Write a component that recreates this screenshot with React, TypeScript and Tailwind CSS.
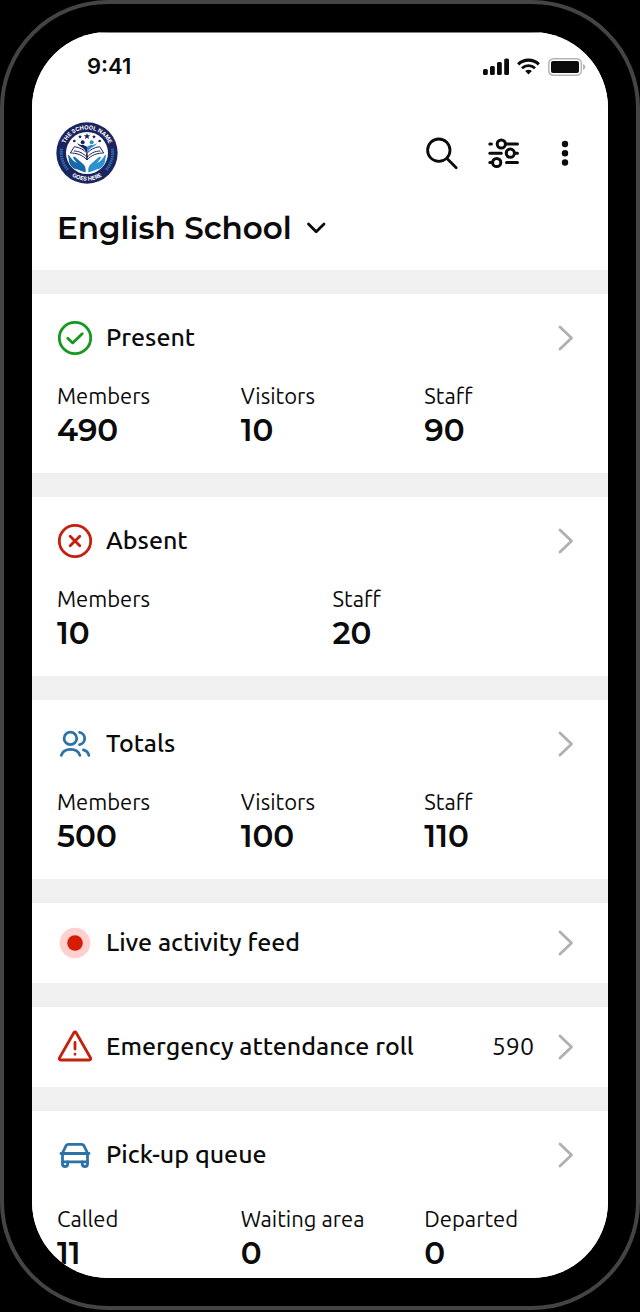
import type { ReactNode } from 'react';

interface Stat {
  label: string;
  value: number;
}

interface CardProps {
  icon: ReactNode;
  title: string;
  stats?: Stat[];
  count?: number;
  roomy?: boolean;
}

const SchoolLogo = () => (
  <svg viewBox="0 0 186 186" className="size-[62px]" role="img" aria-label="The School Name Goes Here">
    <defs>
      <path id="logo-top" d="M 22 93 A 71 71 0 0 1 164 93" />
      <path id="logo-bottom" d="M 10 93 A 83 83 0 0 0 176 93" />
    </defs>
    <circle cx="93" cy="93" r="92" fill="#1c2460" />
    <circle cx="93" cy="93" r="63" fill="#fff" />
    <g fill="#fff" fontFamily="Inter, sans-serif" fontWeight="700" fontSize="17" textAnchor="middle">
      <text>
        <textPath href="#logo-top" startOffset="50%">THE SCHOOL NAME</textPath>
      </text>
      <text>
        <textPath href="#logo-bottom" startOffset="50%">GOES HERE</textPath>
      </text>
    </g>
    {/* laurels */}
    <g fill="none" stroke="#2a6ba8" strokeWidth="9" strokeDasharray="5 2">
      <path d="M17 80A77 77 0 0 0 36 144" />
      <path d="M169 80A77 77 0 0 1 150 144" />
    </g>
    {/* stars */}
    <g fill="#1c2460">
      <path d="m93 33 2.6 6.4 7 .5-5.400 4.500 1.700 6.800L93 47.500l-5.900 3.700 1.700-6.800-5.400-4.500 7-.5z" />
      <path d="m72 38 1.700 4 4.300.4-3.300 2.800 1 4.300-3.700-2.300-3.700 2.300 1-4.300-3.300-2.800 4.300-.4z" />
      <path d="m114 38 1.700 4 4.300.4-3.300 2.800 1 4.300-3.700-2.300-3.700 2.300 1-4.300-3.300-2.800 4.300-.4z" />
      <circle cx="55" cy="57" r="4" />
      <circle cx="131" cy="57" r="4" />
    </g>
    {/* people over the book */}
    <circle cx="80" cy="61" r="6" fill="#1c2460" />
    <circle cx="107" cy="61" r="6" fill="#2b8ccb" />
    <path d="M63 63c7 13 18 9 30 30V74l-12-6c-8 2-12-1-18-5z" fill="#1c2460" />
    <path d="M123 63c-7 13-18 9-30 30V74l12-6c8 2 12-1 18-5z" fill="#2b8ccb" />
    <g fill="#fff" stroke="#1c2460" strokeWidth="3" strokeLinejoin="round">
      <path d="M93 114C79 98 61 93 43 93l12-19c16 2 29 9 38 20z" />
      <path d="M93 114c14-16 32-21 50-21l-12-19c-16 2-29 9-38 20z" />
      <path d="M53 87c16 0 30 7 40 19 10-12 24-19 40-19" fill="none" />
      <path d="M93 94v20" />
    </g>
    {/* hands */}
    <path
      d="M36 98c3 0 5 3 7 8l9 10 11 8-11-15c-2-4 2-6 6-3l20 17c9 7 12 14 11 28-14-2-18-7-27-9-13-3-20-12-23-23z"
      fill="#1769a8"
    />
    <path
      d="M150 98c-3 0-5 3-7 8l-9 10-11 8 11-15c2-4-2-6-6-3l-20 17c-9 7-12 14-11 28 14-2 18-7 27-9 13-3 20-12 23-23z"
      fill="#2b92cf"
    />
  </svg>
);

const StatusIcons = () => (
  <div className="flex items-center gap-2">
    <svg viewBox="0 0 26 17" className="h-[17px] w-[26px]" fill="#0b0b0b" aria-hidden="true">
      <rect x="0" y="11" width="4.800" height="6" rx="1.500" />
      <rect x="7" y="8" width="4.800" height="9" rx="1.500" />
      <rect x="14" y="4" width="4.800" height="13" rx="1.500" />
      <rect x="21.200" y="0.500" width="4.800" height="16.500" rx="1.500" />
    </svg>
    <svg viewBox="0 0 24 17" className="h-[17px] w-[23px]" fill="none" stroke="#0b0b0b" aria-hidden="true">
      <path d="M1.200 6.200a15.500 15.500 0 0 1 21.600 0" strokeWidth="3.200" />
      <path d="M5.200 10.300a9.800 9.800 0 0 1 13.600 0" strokeWidth="3" />
      <path d="M12 16.800 8.500 13.300a5 5 0 0 1 7 0z" fill="#0b0b0b" stroke="none" />
    </svg>
    <svg viewBox="0 0 38 18" className="h-[18px] w-[38px]" aria-hidden="true">
      <rect x="0.800" y="0.800" width="32.500" height="16.400" rx="4.500" fill="none" stroke="#b4b4b4" strokeWidth="1.500" />
      <rect x="3" y="3" width="28" height="12" rx="2" fill="#0b0b0b" />
      <path d="M35 6v6c1.500-.6 2.300-1.700 2.300-3S36.500 6.600 35 6z" fill="#b4b4b4" />
    </svg>
  </div>
);

const SearchIcon = () => (
  <svg viewBox="0 0 36 36" className="size-9" fill="none" stroke="#0b0b0b" strokeWidth="2.800" strokeLinecap="round">
    <circle cx="15.800" cy="15.200" r="11.200" />
    <path d="m24 23.500 9.200 9.200" />
  </svg>
);

const FilterIcon = () => (
  <svg viewBox="0 0 36 36" className="size-9" fill="none" stroke="#0b0b0b" strokeWidth="3" strokeLinecap="round">
    <circle cx="16.300" cy="9" r="4.100" />
    <circle cx="25.300" cy="18.200" r="4.100" />
    <circle cx="11.700" cy="27.500" r="4.100" />
    <path d="M4.800 9h1.600M21 9h11.500M4.800 18.200h11.500M30 18.200h2.500M4.800 27.500h2.500M21.500 27.500h11" />
  </svg>
);

const MoreIcon = () => (
  <svg viewBox="0 0 36 36" className="size-9" fill="#0b0b0b">
    <circle cx="18" cy="9" r="3.200" />
    <circle cx="18" cy="18.200" r="3.200" />
    <circle cx="18" cy="27.500" r="3.200" />
  </svg>
);

const CheckIcon = () => (
  <svg viewBox="0 0 36 36" className="size-9" fill="none" stroke="#13991f" strokeWidth="2.800" strokeLinecap="round" strokeLinejoin="round">
    <circle cx="18" cy="18" r="15.700" />
    <path d="m10.800 18.300 4.900 4.600 9.500-9.200" />
  </svg>
);

const CrossIcon = () => (
  <svg viewBox="0 0 36 36" className="size-9" fill="none" stroke="#c4210d" strokeWidth="2.800" strokeLinecap="round">
    <circle cx="18" cy="18" r="15.700" />
    <path d="m13.200 13.200 9.600 9.600M22.800 13.200l-9.600 9.600" />
  </svg>
);

const PeopleIcon = () => (
  <svg viewBox="0 0 36 36" className="size-9" fill="none" stroke="#2c72a6" strokeWidth="2.800" strokeLinecap="round">
    <circle cx="13.400" cy="12.400" r="6.300" />
    <path d="M22.600 6.400a6.200 6.200 0 0 1 0 12.200" />
    <path d="M4.300 29.400c1.200-3.900 4.900-6.100 9.300-6.100s8.100 2.200 9.300 6.100" />
    <path d="M26.400 23.900c3 .8 4.900 2.900 5.500 5.500" />
  </svg>
);

const LiveIcon = () => (
  <svg viewBox="0 0 36 36" className="size-9">
    <circle cx="18" cy="18" r="15.300" fill="#ffd0cd" />
    <circle cx="18" cy="18" r="7.800" fill="#d51c04" />
  </svg>
);

const WarningIcon = () => (
  <svg viewBox="0 0 36 36" className="size-9" fill="none" stroke="#c4210d" strokeWidth="2.800" strokeLinecap="round" strokeLinejoin="round">
    <path d="M17 3.500 2.400 29c-.5 1 .1 2 1.200 2h28.800c1.100 0 1.700-1 1.200-2L19 3.500c-.5-.8-1.500-.8-2 0z" />
    <path d="M18 13.500v6.500M18 25.200v.1" />
  </svg>
);

const CarIcon = () => (
  <svg viewBox="0 0 36 36" className="size-9" fill="none" stroke="#2c72a6" strokeWidth="2.800" strokeLinecap="round" strokeLinejoin="round">
    <path d="m5.500 16 3.600-7.300c.5-1 1.200-1.300 2.300-1.300h13.200c1.100 0 1.800.3 2.300 1.300l3.600 7.300" />
    <path d="M4 16.500h28" />
    <path d="M5.500 16.500v10.800c0 1.400 1 2.200 2.600 2.200s2.600-.8 2.600-2.200v-2.500h14.600v2.500c0 1.400 1 2.200 2.600 2.200s2.600-.8 2.600-2.200V16.500" />
    <path d="M5.500 24.800h5.200M25.300 24.800h5.200" />
  </svg>
);

const Chevron = () => (
  <svg viewBox="0 0 18 28" className="h-7 w-[18px]" fill="none" stroke="#b0b0b0" strokeWidth="2.800" strokeLinecap="round" strokeLinejoin="round" aria-hidden="true">
    <path d="m4 3 11.500 11L4 25" />
  </svg>
);

const Card = ({ icon, title, stats, count, roomy }: CardProps) => (
  <section className={stats ? 'bg-white pt-6 pb-[23px] pl-[25px]' : 'bg-white py-5 pl-[25px]'}>
    <a href="#" className="flex h-10 items-center pr-[34px]">
      {icon}
      <h2 className="ml-[13px] flex-1 text-[25px] font-medium">{title}</h2>
      {count !== undefined && <span className="mr-[22px] text-[25px]">{count}</span>}
      <Chevron />
    </a>
    {stats && (
      <dl
        className={`grid ${stats.length === 2 ? 'grid-cols-2' : 'grid-cols-3'} ${roomy ? 'mt-[30px]' : 'mt-6'}`}
      >
        {stats.map((stat) => (
          <div key={stat.label}>
            <dt className="text-[22px] leading-7">{stat.label}</dt>
            <dd className="font-['Montserrat','Inter',sans-serif] text-[31px] leading-10 font-semibold">{stat.value}</dd>
          </div>
        ))}
      </dl>
    )}
  </section>
);

const cards: CardProps[] = [
  {
    icon: <CheckIcon />,
    title: 'Present',
    stats: [
      { label: 'Members', value: 490 },
      { label: 'Visitors', value: 10 },
      { label: 'Staff', value: 90 },
    ],
  },
  {
    icon: <CrossIcon />,
    title: 'Absent',
    stats: [
      { label: 'Members', value: 10 },
      { label: 'Staff', value: 20 },
    ],
  },
  {
    icon: <PeopleIcon />,
    title: 'Totals',
    stats: [
      { label: 'Members', value: 500 },
      { label: 'Visitors', value: 100 },
      { label: 'Staff', value: 110 },
    ],
  },
  { icon: <LiveIcon />, title: 'Live activity feed' },
  { icon: <WarningIcon />, title: 'Emergency attendance roll', count: 590 },
  {
    icon: <CarIcon />,
    title: 'Pick-up queue',
    roomy: true,
    stats: [
      { label: 'Called', value: 11 },
      { label: 'Waiting area', value: 0 },
      { label: 'Departed', value: 0 },
    ],
  },
];

const App = () => {
  return (
    <div className="h-screen bg-black pb-0.5">
      {/* phone frame */}
      <div className="h-full rounded-[108px] border-4 border-[#444444] p-7">
        <div className="h-full overflow-hidden rounded-[76px] bg-[#f0f0f0] font-['Ubuntu','Noto_Sans',sans-serif] text-[#0b0b0b]">
          <header className="bg-white pb-[22px]">
            <div className="flex h-[68px] items-center justify-between border-t border-[#808080] pr-[22px] pl-[55px]">
              <span className="font-['Inter',sans-serif] text-[22px] font-semibold">9:41</span>
              <StatusIcons />
            </div>
            <div className="mt-[22px] flex items-center justify-between pr-[25px] pl-6">
              <SchoolLogo />
              <div className="flex gap-[26px]">
                <button type="button" aria-label="Search">
                  <SearchIcon />
                </button>
                <button type="button" aria-label="Filters">
                  <FilterIcon />
                </button>
                <button type="button" aria-label="More options">
                  <MoreIcon />
                </button>
              </div>
            </div>
            <button type="button" className="mt-6 ml-[25px] flex items-center gap-3.5">
              <h1 className="font-['Montserrat','Inter',sans-serif] text-[31px] leading-10 font-semibold">English School</h1>
              <svg viewBox="0 0 20 12" className="h-3 w-5" fill="none" stroke="#0b0b0b" strokeWidth="2.800" strokeLinecap="round" strokeLinejoin="round" aria-hidden="true">
                <path d="m2.500 2 7.700 7.700L18 2" />
              </svg>
            </button>
          </header>
          <main className="mt-6 flex flex-col gap-6">
            {cards.map((card) => (
              <Card key={card.title} {...card} />
            ))}
          </main>
        </div>
      </div>
    </div>
  );
};

export default App;
